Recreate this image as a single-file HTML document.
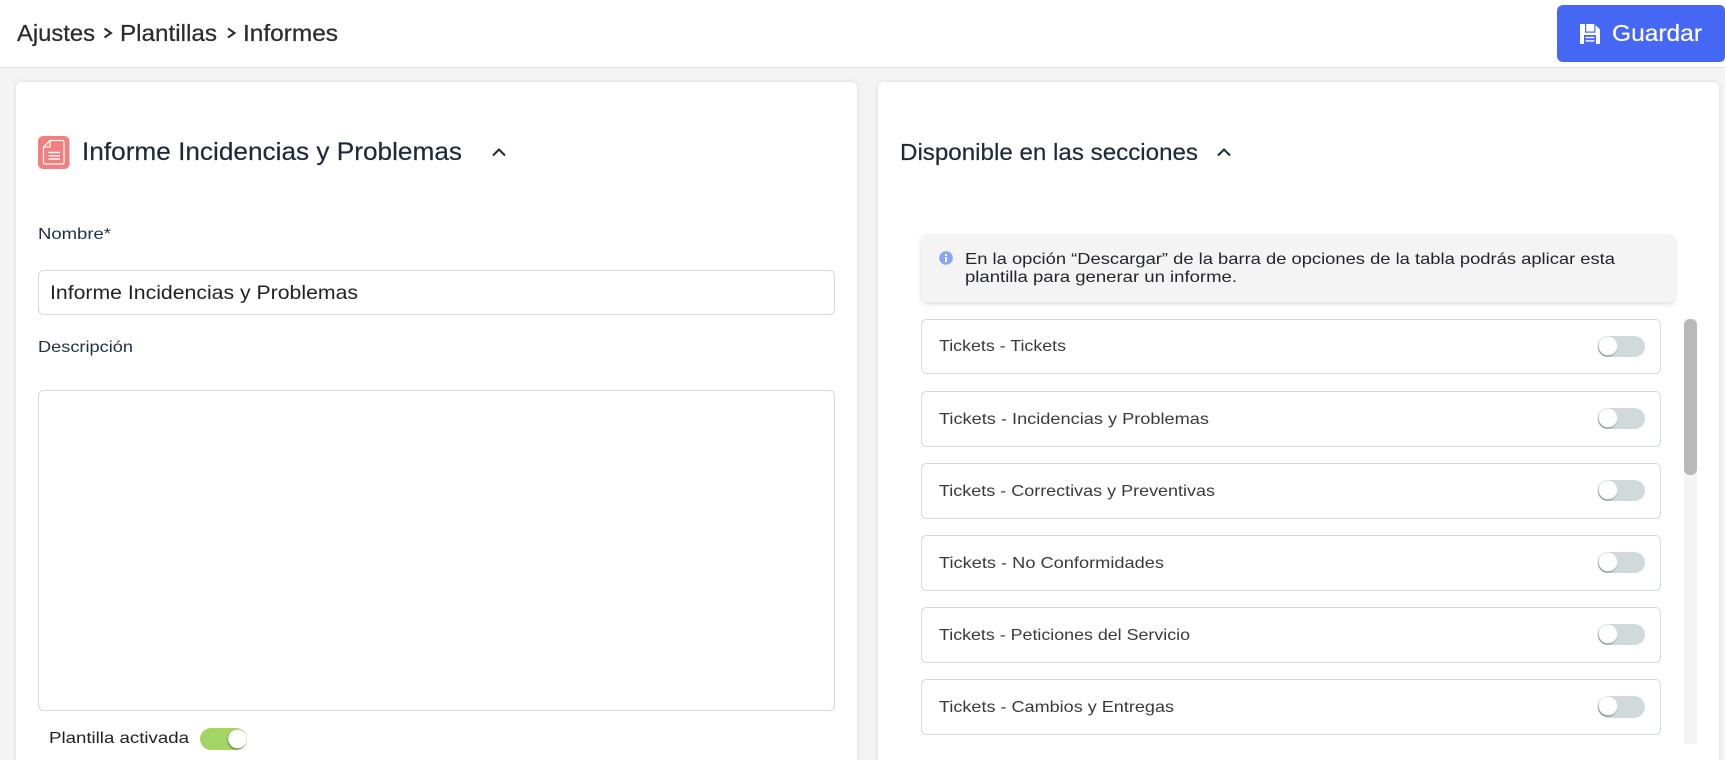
<!DOCTYPE html>
<html lang="es">
<head>
<meta charset="utf-8">
<title>Ajustes</title>
<style>
html,body{margin:0;padding:0;background:#f4f4f4;width:1725px;height:760px;overflow:hidden}
svg{display:block}
text{font-family:"Liberation Sans",sans-serif;white-space:pre}
</style>
</head>
<body>
<svg width="1725" height="760" viewBox="0 0 1725 760" xmlns="http://www.w3.org/2000/svg">
<defs>
<filter id="card" x="-5%" y="-5%" width="110%" height="110%"><feDropShadow dx="0" dy="0" stdDeviation="2" flood-color="#000" flood-opacity=".12"/></filter>
<filter id="info" x="-5%" y="-20%" width="110%" height="140%"><feDropShadow dx="0" dy="2" stdDeviation="2.500" flood-color="#000" flood-opacity=".13"/></filter>
<filter id="knob" x="-40%" y="-40%" width="180%" height="180%"><feDropShadow dx="-.5" dy="1" stdDeviation=".8" flood-color="#000" flood-opacity=".5"/></filter>
</defs>

<rect width="1725" height="760" fill="#f4f4f4"/>
<!-- header -->
<rect width="1725" height="67" fill="#fff"/>
<rect y="67" width="1725" height="1" fill="#dcdfdf"/>
<g font-size="23" fill="#2e2c2a" stroke="#2e2c2a" stroke-width=".25">
<text x="17" y="41" textLength="78" lengthAdjust="spacingAndGlyphs">Ajustes</text>
<text x="120" y="41" textLength="97" lengthAdjust="spacingAndGlyphs">Plantillas</text>
<text x="243" y="41" textLength="95" lengthAdjust="spacingAndGlyphs">Informes</text>
</g>
<path d="M104.500 28.500l6.500 4.500-6.500 4.500M228 28.500l6.500 4.500-6.500 4.500" fill="none" stroke="#2e2c2a" stroke-width="2"/>
<!-- button -->
<path d="M1563 5H1720a5 5 0 0 1 5 5V57a5 5 0 0 1-5 5H1563a6 6 0 0 1-6-6V11a6 6 0 0 1 6-6z" fill="#4567f4"/>
<path fill="#fff" d="M1580 24h14.500l5.500 5.500V44h-20z"/>
<rect x="1585" y="24" width="1.200" height="8" fill="#4567f4"/>
<rect x="1585" y="31.500" width="10" height="1.200" fill="#4567f4"/>
<rect x="1594.300" y="24" width="1.200" height="8.700" fill="#4567f4"/>
<rect x="1584" y="35" width="12" height="9" fill="#4567f4"/>
<rect x="1585.500" y="36.800" width="9" height="1.400" fill="#fff"/>
<rect x="1585.500" y="40.200" width="9" height="1.400" fill="#fff"/>
<text x="1612" y="41" font-size="23" fill="#fff" stroke="#fff" stroke-width=".2" textLength="90" lengthAdjust="spacingAndGlyphs">Guardar</text>

<!-- cards -->
<rect x="16" y="82" width="841" height="700" rx="6" fill="#fff" filter="url(#card)"/>
<rect x="878" y="82" width="841" height="700" rx="6" fill="#fff" filter="url(#card)"/>

<!-- left title -->
<rect x="38" y="136" width="31.500" height="33" rx="5" fill="#f27f7f"/>
<path d="M50 140.500h12.500a1.500 1.500 0 0 1 1.500 1.500v20.500a1.500 1.500 0 0 1-1.500 1.500h-17.500a1.500 1.500 0 0 1-1.500-1.500V147z" fill="none" stroke="#fff" stroke-width="1.300" opacity=".95"/>
<path d="M50 140.500v6.500h-6.500" fill="none" stroke="#fff" stroke-width="1.300" opacity=".95"/>
<path d="M48.300 152.500h11.700M48.300 155.800h11.700M48.300 159h11.700" stroke="#fff" stroke-width="1.400" opacity=".95"/>
<text x="82" y="160" font-size="25" fill="#1e2a38" stroke="#1e2a38" stroke-width=".2" textLength="380" lengthAdjust="spacingAndGlyphs">Informe Incidencias y Problemas</text>
<path d="M493 155.500l6-6 6 6" fill="none" stroke="#1e2a38" stroke-width="2"/>

<text x="38" y="239" font-size="16" fill="#1e3048" textLength="73" lengthAdjust="spacingAndGlyphs">Nombre*</text>
<rect x="38.500" y="270.500" width="796" height="44" rx="5" fill="#fff" stroke="#d2dcdc"/>
<text x="50" y="299" font-size="19.500" fill="#1f2022" textLength="308" lengthAdjust="spacingAndGlyphs">Informe Incidencias y Problemas</text>
<text x="38" y="352" font-size="16" fill="#1e3048" textLength="95" lengthAdjust="spacingAndGlyphs">Descripción</text>
<rect x="38.500" y="390.500" width="796" height="320" rx="5" fill="#fff" stroke="#d2dcdc"/>
<text x="49" y="743" font-size="16" fill="#222" textLength="140" lengthAdjust="spacingAndGlyphs">Plantilla activada</text>
<rect x="200" y="728" width="47" height="22" rx="11" fill="#a3d565"/>
<circle cx="237.500" cy="739" r="9.300" fill="#fff" filter="url(#knob)"/>

<!-- right title -->
<text x="900" y="160" font-size="23" fill="#1e2a38" stroke="#1e2a38" stroke-width=".2" textLength="298" lengthAdjust="spacingAndGlyphs">Disponible en las secciones</text>
<path d="M1218 155.500l6-6 6 6" fill="none" stroke="#1e2a38" stroke-width="2"/>

<!-- info -->
<rect x="921" y="234" width="754" height="68" rx="6" fill="#f4f4f4" filter="url(#info)"/>
<circle cx="946" cy="258" r="6.800" fill="#86a4fb"/>
<rect x="945" y="257" width="2" height="5" fill="#fff"/>
<rect x="945" y="254" width="2" height="2" fill="#fff"/>
<g font-size="16" fill="#22252b">
<text x="965" y="264" textLength="650" lengthAdjust="spacingAndGlyphs">En la opción “Descargar” de la barra de opciones de la tabla podrás aplicar esta</text>
<text x="965" y="282" textLength="272" lengthAdjust="spacingAndGlyphs">plantilla para generar un informe.</text>
</g>

<!-- rows -->
<g fill="#fff" stroke="#d2dcdc">
<rect x="921.500" y="319.500" width="739" height="54" rx="5"/>
<rect x="921.500" y="391.500" width="739" height="55" rx="5"/>
<rect x="921.500" y="463.500" width="739" height="55" rx="5"/>
<rect x="921.500" y="535.500" width="739" height="55" rx="5"/>
<rect x="921.500" y="607.500" width="739" height="55" rx="5"/>
<rect x="921.500" y="679.500" width="739" height="55" rx="5"/>
</g>
<g font-size="16" fill="#3a3a3c">
<text x="939" y="351" textLength="127" lengthAdjust="spacingAndGlyphs">Tickets - Tickets</text>
<text x="939" y="424" textLength="270" lengthAdjust="spacingAndGlyphs">Tickets - Incidencias y Problemas</text>
<text x="939" y="496" textLength="276" lengthAdjust="spacingAndGlyphs">Tickets - Correctivas y Preventivas</text>
<text x="939" y="568" textLength="225" lengthAdjust="spacingAndGlyphs">Tickets - No Conformidades</text>
<text x="939" y="640" textLength="251" lengthAdjust="spacingAndGlyphs">Tickets - Peticiones del Servicio</text>
<text x="939" y="712" textLength="235" lengthAdjust="spacingAndGlyphs">Tickets - Cambios y Entregas</text>
</g>
<g fill="#d0dadb">
<rect x="1598" y="336" width="47" height="21" rx="10.500"/>
<rect x="1598" y="408" width="47" height="21" rx="10.500"/>
<rect x="1598" y="480" width="47" height="21" rx="10.500"/>
<rect x="1598" y="552" width="47" height="21" rx="10.500"/>
<rect x="1598" y="624" width="47" height="21" rx="10.500"/>
<rect x="1598" y="696" width="47" height="22" rx="11"/>
</g>
<g fill="#fff" filter="url(#knob)">
<circle cx="1608" cy="346" r="9.300"/>
<circle cx="1608" cy="418" r="9.300"/>
<circle cx="1608" cy="490" r="9.300"/>
<circle cx="1608" cy="562" r="9.300"/>
<circle cx="1608" cy="634" r="9.300"/>
<circle cx="1608" cy="706" r="9.300"/>
</g>

<!-- scrollbar -->
<rect x="1684" y="319" width="13" height="425" fill="#f4f4f4"/>
<rect x="1684" y="319" width="13" height="156" rx="6" fill="#b9b9b9"/>
</svg>
</body>
</html>
